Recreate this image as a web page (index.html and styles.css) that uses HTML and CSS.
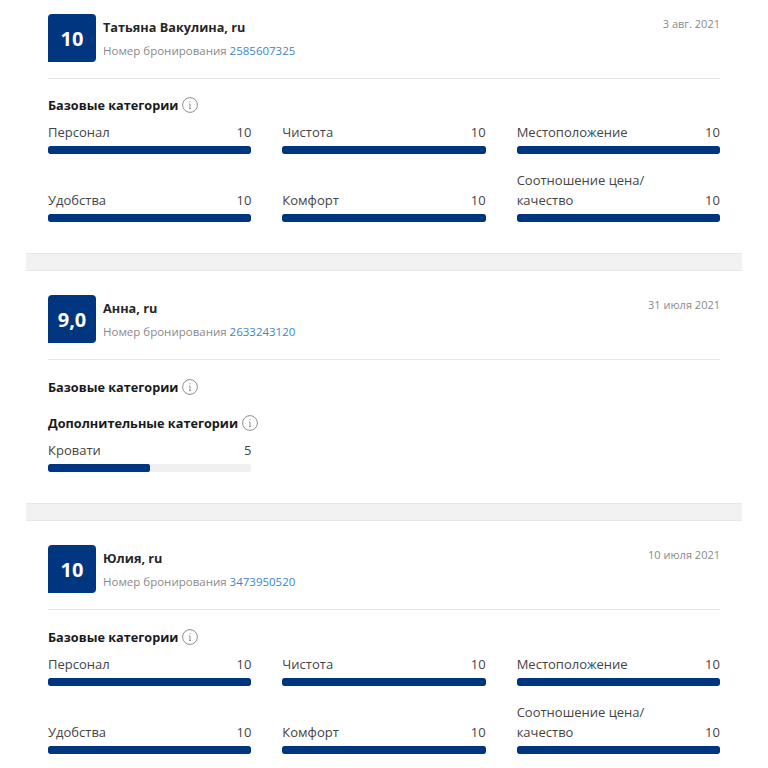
FILE: index.html
```html
<!DOCTYPE html>
<html lang="ru">
<head>
  <meta charset="UTF-8">
  <meta name="viewport" content="width=device-width, initial-scale=1.0">
  <title>Отзывы гостей</title>
  <link rel="stylesheet" href="styles.css">
</head>
<body>
  <main class="reviews">
    <!-- Review 1 -->
    <section class="review review-first">
      <header class="review-head">
        <div class="score">10</div>
        <div class="guest">
          <h2 class="guest-name">Татьяна Вакулина, ru</h2>
          <p class="booking">Номер бронирования <a href="#">2585607325</a></p>
        </div>
        <time class="review-date">3 авг. 2021</time>
      </header>
      <div class="category-group">
        <h3 class="group-title">Базовые категории
          <svg class="info" viewBox="0 0 16 16"><circle cx="8" cy="8" r="7.4"/><path d="M8 7v4.6M7 7h1M7 11.6h2"/><path d="M8 4.2v1"/></svg>
        </h3>
        <div class="category-grid">
          <div class="category"><div class="category-label"><span>Персонал</span><span>10</span></div><div class="bar"><div class="bar-fill" style="width: 100%"></div></div></div>
          <div class="category"><div class="category-label"><span>Чистота</span><span>10</span></div><div class="bar"><div class="bar-fill" style="width: 100%"></div></div></div>
          <div class="category"><div class="category-label"><span>Местоположение</span><span>10</span></div><div class="bar"><div class="bar-fill" style="width: 100%"></div></div></div>
          <div class="category"><div class="category-label"><span>Удобства</span><span>10</span></div><div class="bar"><div class="bar-fill" style="width: 100%"></div></div></div>
          <div class="category"><div class="category-label"><span>Комфорт</span><span>10</span></div><div class="bar"><div class="bar-fill" style="width: 100%"></div></div></div>
          <div class="category"><div class="category-label"><span>Соотношение цена/<br>качество</span><span>10</span></div><div class="bar"><div class="bar-fill" style="width: 100%"></div></div></div>
        </div>
      </div>
    </section>

    <div class="band"></div>

    <!-- Review 2 -->
    <section class="review">
      <header class="review-head">
        <div class="score">9,0</div>
        <div class="guest">
          <h2 class="guest-name">Анна, ru</h2>
          <p class="booking">Номер бронирования <a href="#">2633243120</a></p>
        </div>
        <time class="review-date">31 июля 2021</time>
      </header>
      <div class="category-group">
        <h3 class="group-title">Базовые категории
          <svg class="info" viewBox="0 0 16 16"><circle cx="8" cy="8" r="7.4"/><path d="M8 7v4.6M7 7h1M7 11.6h2"/><path d="M8 4.2v1"/></svg>
        </h3>
      </div>
      <div class="category-group">
        <h3 class="group-title">Дополнительные категории
          <svg class="info" viewBox="0 0 16 16"><circle cx="8" cy="8" r="7.4"/><path d="M8 7v4.6M7 7h1M7 11.6h2"/><path d="M8 4.2v1"/></svg>
        </h3>
        <div class="category-grid">
          <div class="category"><div class="category-label"><span>Кровати</span><span>5</span></div><div class="bar"><div class="bar-fill" style="width: 50%"></div></div></div>
        </div>
      </div>
    </section>

    <div class="band"></div>

    <!-- Review 3 -->
    <section class="review">
      <header class="review-head">
        <div class="score">10</div>
        <div class="guest">
          <h2 class="guest-name">Юлия, ru</h2>
          <p class="booking">Номер бронирования <a href="#">3473950520</a></p>
        </div>
        <time class="review-date">10 июля 2021</time>
      </header>
      <div class="category-group">
        <h3 class="group-title">Базовые категории
          <svg class="info" viewBox="0 0 16 16"><circle cx="8" cy="8" r="7.4"/><path d="M8 7v4.6M7 7h1M7 11.6h2"/><path d="M8 4.2v1"/></svg>
        </h3>
        <div class="category-grid">
          <div class="category"><div class="category-label"><span>Персонал</span><span>10</span></div><div class="bar"><div class="bar-fill" style="width: 100%"></div></div></div>
          <div class="category"><div class="category-label"><span>Чистота</span><span>10</span></div><div class="bar"><div class="bar-fill" style="width: 100%"></div></div></div>
          <div class="category"><div class="category-label"><span>Местоположение</span><span>10</span></div><div class="bar"><div class="bar-fill" style="width: 100%"></div></div></div>
          <div class="category"><div class="category-label"><span>Удобства</span><span>10</span></div><div class="bar"><div class="bar-fill" style="width: 100%"></div></div></div>
          <div class="category"><div class="category-label"><span>Комфорт</span><span>10</span></div><div class="bar"><div class="bar-fill" style="width: 100%"></div></div></div>
          <div class="category"><div class="category-label"><span>Соотношение цена/<br>качество</span><span>10</span></div><div class="bar"><div class="bar-fill" style="width: 100%"></div></div></div>
        </div>
      </div>
    </section>
  </main>
</body>
</html>
```

FILE: styles.css
```css
/* General Styles */
* {
  margin: 0;
  padding: 0;
  box-sizing: border-box;
}

html, body {
  height: 768px;
  overflow: hidden;
}

body {
  font-family: "Open Sans", "Noto Sans", sans-serif;
  font-size: 13px;
  line-height: 20px;
  background-color: #fff;
  color: #333;
}

.reviews {
  width: 716px;
  margin-left: 26px;
}

/* Review */
.review {
  padding: 24px 22px 31px;
}

.review-first {
  padding-top: 14px;
}

.band {
  height: 18px;
  background-color: #f2f2f2;
  border-top: 1px solid #e8e8e8;
  border-bottom: 1px solid #e8e8e8;
}

/* Review Header */
.review-head {
  display: flex;
  align-items: flex-start;
  padding-bottom: 16px;
  border-bottom: 1px solid #e6e6e6;
}

.score {
  width: 48px;
  height: 48px;
  flex-shrink: 0;
  display: flex;
  align-items: center;
  justify-content: center;
  padding-top: 2px;
  background-color: #003580;
  color: #fff;
  font-size: 20px;
  font-weight: 700;
  border-radius: 4px 4px 4px 0;
}

.guest {
  flex: 1;
  margin-left: 7px;
}

.guest-name {
  font-size: 12.7px;
  font-weight: 700;
  line-height: 20px;
  margin-top: 3px;
  color: #262626;
}

.booking {
  margin-top: 4px;
  font-size: 11.5px;
  color: #8a8a8a;
}

.booking a {
  color: #3d86c6;
  text-decoration: none;
}

.review-date {
  font-size: 11px;
  color: #8a8a8a;
}

/* Categories */
.category-group {
  margin-top: 17px;
}

.review-first .category-group,
.category-group + .category-group {
  margin-top: 16px;
}

.group-title {
  display: flex;
  align-items: center;
  gap: 4px;
  font-size: 12.7px;
  font-weight: 700;
  line-height: 20px;
  color: #1a1a1a;
}

.info {
  width: 16px;
  height: 16px;
  fill: none;
  stroke: #8f8f8f;
  stroke-width: 1;
}

.category-grid {
  display: grid;
  grid-template-columns: repeat(3, 1fr);
  column-gap: 31px;
  row-gap: 16px;
  margin-top: 7px;
}

.category {
  display: flex;
  flex-direction: column;
  justify-content: flex-end;
}

.category-label {
  display: flex;
  justify-content: space-between;
  align-items: flex-end;
  color: #444;
}

/* Bars */
.bar {
  height: 8px;
  margin-top: 4px;
  background-color: #f0f0f0;
  border-radius: 2px;
  overflow: hidden;
}

.bar-fill {
  height: 100%;
  background-color: #003580;
  border-radius: 2px;
}
```
